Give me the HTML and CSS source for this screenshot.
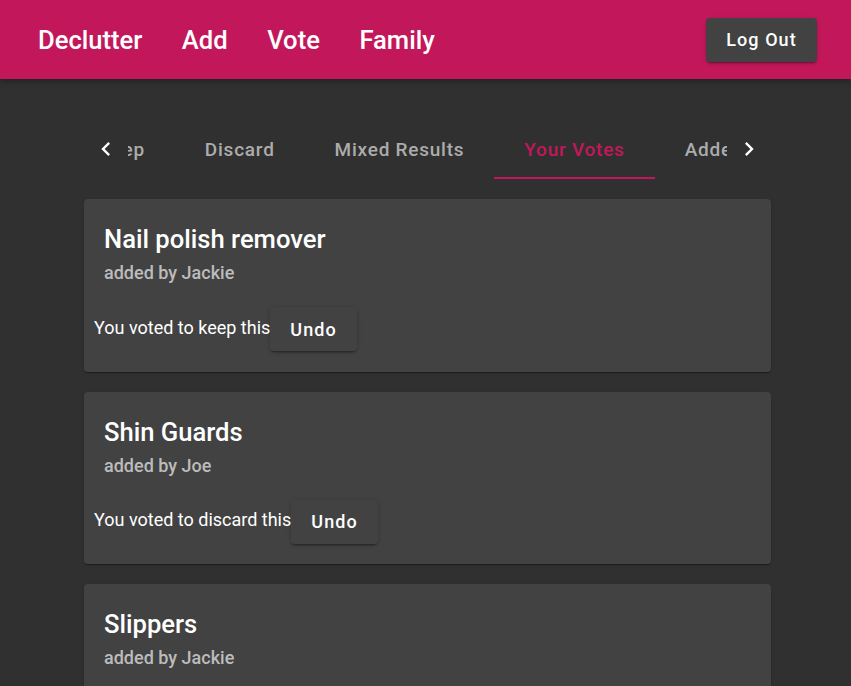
FILE: index.html
```html
<!DOCTYPE html>
<html>
<head>
<meta charset="utf-8">
<link rel="stylesheet" href="styles.css">
</head>
<body>
<header class="appbar">
  <nav class="nav">
    <a class="nav-link">Declutter</a>
    <a class="nav-link">Add</a>
    <a class="nav-link">Vote</a>
    <a class="nav-link">Family</a>
  </nav>
  <button class="btn btn-logout">Log Out</button>
</header>
<main class="content">
  <div class="tabs">
    <div class="scroll-btn">
      <svg viewBox="0 0 24 24" width="28" height="28"><path fill="#fff" d="M15.41 16.59L10.83 12l4.58-4.59L14 6l-6 6 6 6 1.41-1.41z"/></svg>
    </div>
    <div class="tabs-viewport">
      <div class="tabs-strip">
        <div class="tab">Keep</div>
        <div class="tab">Discard</div>
        <div class="tab">Mixed Results</div>
        <div class="tab tab-active">Your Votes</div>
        <div class="tab">Added by You</div>
      </div>
    </div>
    <div class="scroll-btn">
      <svg viewBox="0 0 24 24" width="28" height="28"><path fill="#fff" d="M8.59 16.59L13.17 12 8.59 7.41 10 6l6 6-6 6-1.41-1.41z"/></svg>
    </div>
  </div>

  <section class="card">
    <h2 class="card-title">Nail polish remover</h2>
    <div class="card-sub">added by Jackie</div>
    <div class="vote-row"><span class="vote-text">You voted to keep this</span><button class="btn btn-undo">Undo</button></div>
  </section>

  <section class="card">
    <h2 class="card-title">Shin Guards</h2>
    <div class="card-sub">added by Joe</div>
    <div class="vote-row"><span class="vote-text">You voted to discard this</span><button class="btn btn-undo">Undo</button></div>
  </section>

  <section class="card">
    <h2 class="card-title">Slippers</h2>
    <div class="card-sub">added by Jackie</div>
    <div class="vote-row"><span class="vote-text">You voted to keep this</span><button class="btn btn-undo">Undo</button></div>
  </section>
</main>
</body>
</html>
```

FILE: styles.css
```css
* { box-sizing: border-box; }
html, body {
  margin: 0;
  padding: 0;
  background: #303030;
  font-family: Roboto, "Liberation Sans", sans-serif;
  color: #fff;
}
body { height: 686px; overflow: hidden; }

.appbar {
  height: 79px;
  background: #c2185b;
  display: flex;
  align-items: center;
  justify-content: space-between;
  padding: 0 34px 0 38px;
  box-shadow: 0 2px 4px -1px rgba(0,0,0,0.2), 0 4px 5px 0 rgba(0,0,0,0.14);
}
.nav { display: flex; gap: 39.5px; }
.nav-link {
  font-size: 25.6px;
  font-weight: 500;
  color: #fff;
  text-decoration: none;
}

.btn {
  font-family: Roboto, "Liberation Sans", sans-serif;
  border: 0;
  background: #424242;
  color: #fff;
  border-radius: 4px;
  font-weight: 500;
  box-shadow: 0 3px 1px -2px rgba(0,0,0,0.2), 0 2px 2px 0 rgba(0,0,0,0.14), 0 1px 5px 0 rgba(0,0,0,0.12);
  cursor: pointer;
}
.btn-logout {
  height: 44px;
  width: 111px;
  font-size: 18px;
  letter-spacing: 0.06em;
  padding: 0;
}

.content {
  width: 687px;
  margin: 0 auto;
  padding-top: 40px;
  position: relative;
  left: 2px;
}

.tabs {
  display: flex;
  height: 60px;
  margin-bottom: 20px;
}
.scroll-btn {
  width: 44px;
  flex: none;
  display: flex;
  align-items: center;
  justify-content: center;
}
.tabs-viewport {
  flex: 1;
  overflow: hidden;
}
.tabs-strip {
  display: flex;
  height: 60px;
  margin-left: -59px;
}
.tab {
  flex: none;
  height: 60px;
  padding: 0 30px;
  display: flex;
  align-items: center;
  font-size: 19px;
  font-weight: 500;
  letter-spacing: 0.04em;
  color: #acacac;
  white-space: nowrap;
}
.tab-active {
  color: #c2185b;
  border-bottom: 2px solid #c2185b;
  padding-top: 2px;
}

.card {
  background: #424242;
  border-radius: 4px;
  box-shadow: 0 2px 1px -1px rgba(0,0,0,0.2), 0 1px 1px 0 rgba(0,0,0,0.14), 0 1px 3px 0 rgba(0,0,0,0.12);
  padding: 24px 20px 20.5px;
  margin-bottom: 20px;
}
.card-title {
  margin: 0;
  font-size: 25.6px;
  line-height: 32px;
  font-weight: 500;
}
.card-sub {
  margin-top: 6px;
  font-size: 18px;
  line-height: 24px;
  font-weight: 500;
  color: #bcbcbc;
}
.vote-row {
  display: flex;
  align-items: center;
  margin: 22px 0 0 -10px;
}
.vote-text {
  font-size: 18px;
  position: relative;
  top: -2px;
}
.btn-undo {
  height: 44px;
  padding: 0 20px;
  font-size: 18px;
  letter-spacing: 0.06em;
}
```
